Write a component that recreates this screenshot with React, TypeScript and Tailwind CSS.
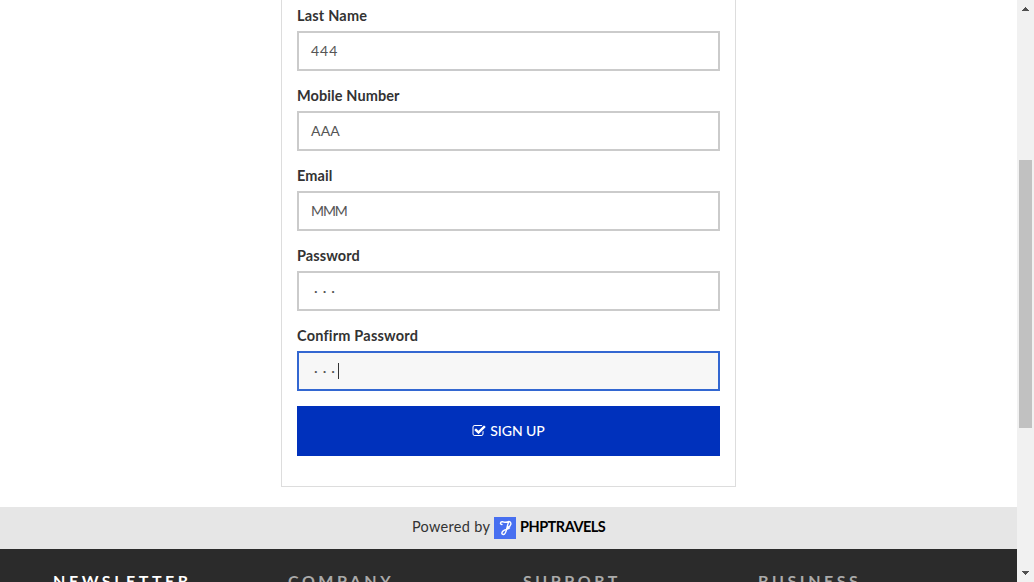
function Field({ label, value, labelClass, valueClass, active }: { label: string; value: string; labelClass: string; valueClass: string; active?: boolean }) {
  return (
    <div className="flex flex-col h-20">
      <label className={"h-[25px] leading-[20px] text-[14.5px] font-bold text-[#333] whitespace-nowrap " + labelClass}>{label}</label>
      <div className={"flex items-center h-10 border-2 pl-3 text-[14px] leading-5 text-[#555] " + (active ? "border-[#3367d1] bg-[#f7f7f7]" : "border-[#cbcbcb] bg-white")}>
        <span className={valueClass}>{value}</span>
        {active && <span className="w-px h-4 -ml-[2px] bg-[#333]" />}
      </div>
    </div>
  );
}

export default function App() {
  return (
    <div className="flex w-[1034px] h-[582px] overflow-hidden bg-white font-['Lato','Noto_Sans',sans-serif]">
      <div className="flex flex-col w-[1017px] h-full">
        <div className="w-[455px] h-[487px] shrink-0 ml-[281px] border border-t-0 border-[#ddd] px-[15px] pt-[6px]">
          <Field label="Last Name" value="444" labelClass="tracking-[0.2px]" valueClass="tracking-[1px]" />
          <Field label="Mobile Number" value="AAA" labelClass="tracking-[0.1px]" valueClass="tracking-[0.2px]" />
          <Field label="Email" value="MMM" labelClass="tracking-[0.1px]" valueClass="tracking-[-1.1px]" />
          <Field label="Password" value="···" labelClass="tracking-[0.1px]" valueClass="tracking-[5px] pl-[3px]" />
          <Field label="Confirm Password" value="···" labelClass="tracking-[0.2px]" valueClass="tracking-[5px] pl-[3px]" active />
          <button className="flex items-center justify-center gap-[4px] w-full h-[50px] bg-[#0031bc] text-white text-[14px] font-medium">
            <svg className="w-[14px] h-[14px]" viewBox="0 0 1792 1792" fill="currentColor">
              <path d="M1472 930v318q0 119-84.5 203.5t-203.5 84.5h-832q-119 0-203.5-84.5t-84.5-203.5v-832q0-119 84.5-203.5t203.5-84.5h832q63 0 117 25 15 7 18 23 3 17-9 29l-49 49q-10 10-23 10-3 0-9-2-23-6-45-6h-832q-66 0-113 47t-47 113v832q0 66 47 113t113 47h832q66 0 113-47t47-113v-254q0-13 9-22l64-64q10-10 23-10 6 0 12 3 20 8 20 29zm231-489l-814 814q-24 24-57 24t-57-24l-430-430q-24-24-24-57t24-57l110-110q24-24 57-24t57 24l263 263 647-647q24-24 57-24t57 24l110 110q24 24 24 57t-24 57z" />
            </svg>
            <span className="mb-[2px] tracking-[-0.05px]">SIGN UP</span>
          </button>
        </div>
        <div className="flex items-center h-[42px] mt-5 shrink-0 bg-[#e6e6e6] pl-[412px] text-[14.5px] whitespace-nowrap">
          <span className="w-[82px] mb-[3px] tracking-[0.3px] text-[#333]">Powered by</span>
          <svg className="w-[22px] h-[22px] bg-[#476ff0]" viewBox="0 0 22 22" fill="none" stroke="white" strokeWidth="1.4" strokeLinecap="round" strokeLinejoin="round">
            <path d="M8 7.5C5.8 7.5 6 4.5 8.5 4.8C11 5.2 12 6 15 4.5C18 5 17.5 9.5 13 10.5M14.5 5.5C12.5 9 13 17 9.5 17.5C7 17.5 7.5 14.5 10 13.3C12 12.3 13 12.8 15.5 11" />
          </svg>
          <span className="ml-[4px] mb-[3px] font-bold tracking-[-0.5px] text-black">PHPTRAVELS</span>
        </div>
        <div className="flex h-[33px] shrink-0 overflow-hidden bg-[#2b2b2b] pl-[53px] pt-[20px] text-[16px] leading-6 font-bold text-[#aaa] tracking-[3.55px]">
          <span className="w-[235px] text-white">NEWSLETTER</span>
          <span className="w-[235px]">COMPANY</span>
          <span className="w-[235px]">SUPPORT</span>
          <span>BUSINESS</span>
        </div>
      </div>
      <div className="flex flex-col items-center w-[17px] h-full bg-[#f1f1f1] px-[2px]">
        <svg className="mt-[7px] w-[7px] h-[4px]" viewBox="0 0 7 4" fill="#505050" shapeRendering="crispEdges"><path d="M3 0h1v1h1v1h1v1h1v1H0V3h1V2h1V1h1z" /></svg>
        <div className="mt-[149px] w-[13px] h-[268px] bg-[#c1c1c1]" />
        <svg className="mt-[143px] w-[7px] h-[4px]" viewBox="0 0 7 4" fill="#505050" shapeRendering="crispEdges"><path d="M0 0h7v1H6v1H5v1H4v1H3V3H2V2H1V1H0z" /></svg>
      </div>
    </div>
  );
}
